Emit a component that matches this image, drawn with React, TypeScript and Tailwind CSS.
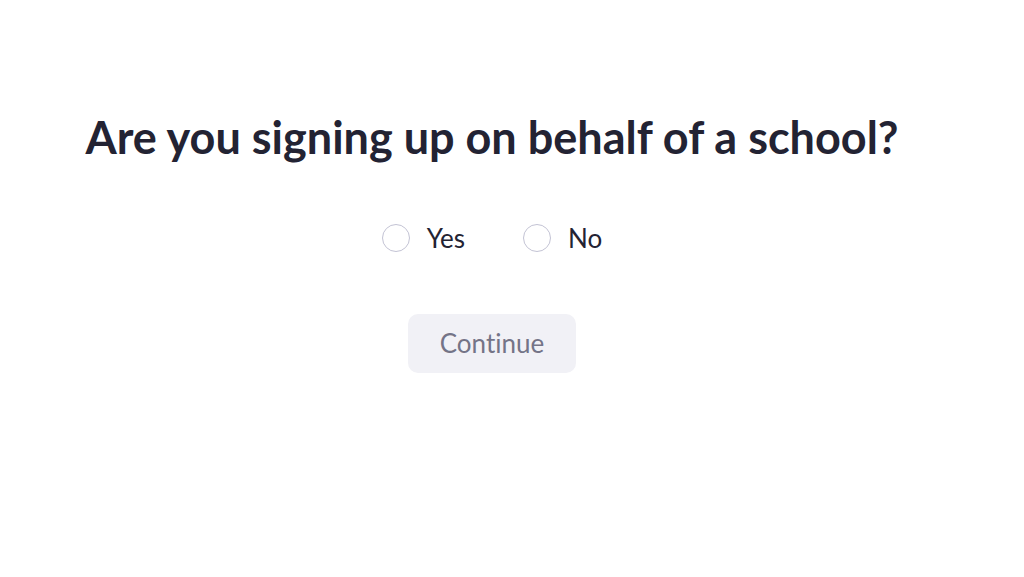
import { useState } from "react";

export default function App() {
    const [choice, setChoice] = useState<string | null>(null);

    return (
        <div className="min-h-[577px] w-full bg-white font-['Lato','Noto_Sans',sans-serif] text-[#232333] [font-variant-ligatures:none]">
            <div className="w-[984px] flex flex-col items-center pt-[107px]">
                <h1 className="text-[45px] font-bold leading-[60px]">
                    Are you signing up on behalf of a school?
                </h1>

                <div className="mt-[56px] flex items-center gap-[58px]">
                    {["Yes", "No"].map(opt => (
                        <label key={opt} className="flex items-center gap-[17px] cursor-pointer">
                            <span
                                onClick={() => setChoice(opt)}
                                className="w-[28px] h-[28px] rounded-full border-[1.5px] border-[#c3c3d4] bg-white flex items-center justify-center"
                            >
                                {choice === opt && <span className="w-[14px] h-[14px] rounded-full bg-[#0e72ed]" />}
                            </span>
                            <span className="text-[26px] leading-[30px]">{opt}</span>
                        </label>
                    ))}
                </div>

                <button
                    disabled={!choice}
                    className="mt-[61px] w-[168px] h-[59px] rounded-[10px] bg-[#f1f1f6] text-[#747487] text-[26px]"
                >
                    Continue
                </button>
            </div>
        </div>
    );
}
